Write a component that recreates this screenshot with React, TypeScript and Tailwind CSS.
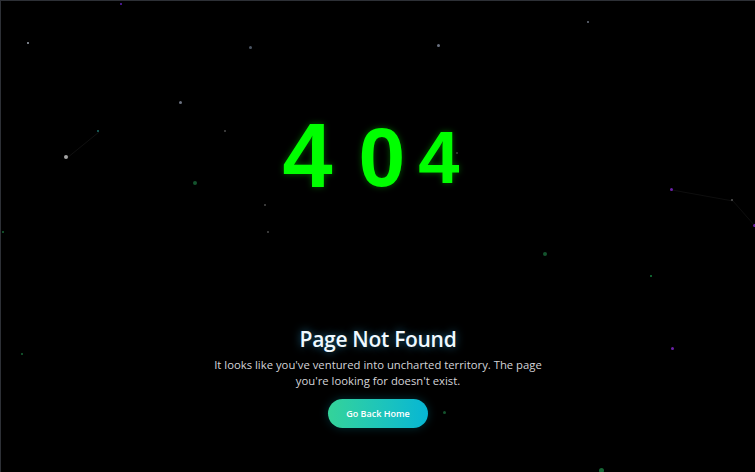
import React from "react";

const stars: { x: number; y: number; s: number; c: string }[] = [
  { x: 121, y: 4, s: 2, c: "#5b21b6" },
  { x: 28, y: 43, s: 2, c: "#9ca3af" },
  { x: 250, y: 47, s: 3, c: "#4b5563" },
  { x: 438, y: 45, s: 3, c: "#6b7280" },
  { x: 588, y: 22, s: 2, c: "#6b7280" },
  { x: 180, y: 102, s: 3, c: "#6b7280" },
  { x: 98, y: 131, s: 2, c: "#1f6f6a" },
  { x: 66, y: 157, s: 4, c: "#a3a3a3" },
  { x: 225, y: 131, s: 2, c: "#4b4b4b" },
  { x: 195, y: 183, s: 4, c: "#14532d" },
  { x: 265, y: 205, s: 2, c: "#4b4b4b" },
  { x: 268, y: 232, s: 2, c: "#4b4b4b" },
  { x: 3, y: 232, s: 2, c: "#166534" },
  { x: 457, y: 153, s: 2, c: "#3f3f3f" },
  { x: 671, y: 189, s: 3, c: "#6b21a8" },
  { x: 732, y: 200, s: 2, c: "#555555" },
  { x: 754, y: 225, s: 3, c: "#6b21a8" },
  { x: 545, y: 254, s: 4, c: "#14532d" },
  { x: 651, y: 276, s: 2, c: "#15803d" },
  { x: 672, y: 348, s: 3, c: "#6b21a8" },
  { x: 22, y: 354, s: 2, c: "#166534" },
  { x: 444, y: 412, s: 3, c: "#14532d" },
  { x: 601, y: 470, s: 5, c: "#166534" },
];

export default function App() {
  return (
    <div className="relative w-[755px] h-[472px] overflow-hidden bg-black border-t border-l border-[#2d3036]">
      <svg className="absolute inset-0" width="755" height="472">
        <line x1="66" y1="157" x2="98" y2="131" stroke="#101010" strokeWidth="1" />
        <line x1="671" y1="189" x2="732" y2="200" stroke="#0e0e0e" strokeWidth="1" />
        <line x1="732" y1="200" x2="754" y2="225" stroke="#0e0e0e" strokeWidth="1" />
      </svg>
      {stars.map((st, i) => (
        <span
          key={i}
          className="absolute rounded-full"
          style={{
            left: st.x - st.s / 2 - 1,
            top: st.y - st.s / 2 - 1,
            width: st.s,
            height: st.s,
            background: st.c,
          }}
        />
      ))}
      <div className="relative flex flex-col items-center pt-[110px]">
        <div
          className="flex items-start mr-[14px] text-[#00ff00] font-bold h-[90px]"
          style={{ fontFamily: '"Liberation Sans", Arial, sans-serif', textShadow: "0 0 6px rgba(0,255,0,0.35)" }}
        >
          <span className="text-[90px] leading-none">4</span>
          <span className="text-[84px] leading-none mt-[4px] ml-[26px]">0</span>
          <span className="text-[74px] leading-none mt-[10px] ml-[13px]">4</span>
        </div>
        <div
          className="flex flex-col items-center mt-[124px]"
          style={{ fontFamily: '"Open Sans", "Noto Sans", sans-serif' }}
        >
          <h1
            className="text-[21px] leading-[28px] font-semibold tracking-[-0.3px] text-[#f0f9ff]"
            style={{ textShadow: "0 0 8px rgba(56,189,248,0.55)" }}
          >
            Page Not Found
          </h1>
          <p className="mt-[4px] w-[345px] text-center text-[11.3px] leading-[16px] text-[#d4d4d8]">
            It looks like you've ventured into uncharted territory. The page you're looking for doesn't exist.
          </p>
          <button className="mt-[10px] w-[100px] h-[29px] rounded-full bg-gradient-to-r from-[#34d399] to-[#06b6d4] text-white text-[9px] font-semibold shadow-[0_0_10px_rgba(6,182,212,0.25)]">
            Go Back Home
          </button>
        </div>
      </div>
    </div>
  );
}
